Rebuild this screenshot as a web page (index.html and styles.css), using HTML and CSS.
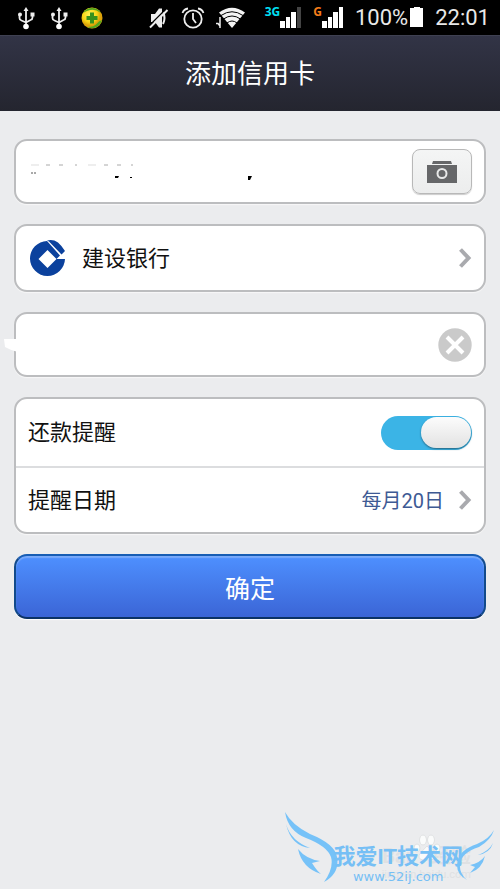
FILE: index.html
```html
<!DOCTYPE html>
<html lang="zh-CN">
<head>
<meta charset="utf-8">
<meta name="viewport" content="width=device-width, initial-scale=1">
<title>添加信用卡</title>
<link rel="stylesheet" href="styles.css">
</head>
<body>
<svg class="defs" aria-hidden="true">
  <symbol id="usb" viewBox="0 0 22 24">
    <path d="M11 3v17M4.500 8.500v3.500q0 2 2 2.500l4.500 2M17.500 8.500v3q0 2-2 2.500l-4.500 2.500" fill="none" stroke="#eee" stroke-width="1.800"/>
    <path d="M11 1l2.500 4h-5zM15.500 6.500h4v4h-4z" fill="#eee"/>
    <circle cx="5" cy="8.500" r="2" fill="#eee"/><circle cx="11" cy="20.500" r="2.800" fill="#fff"/>
  </symbol>
  <symbol id="chevron" viewBox="0 0 14 22"><path d="M2.500 2.500l8 8.500-8 8.500" fill="none" stroke="#a9aaae" stroke-width="4"/></symbol>
</svg>
<div class="status">
  <div class="status-group notices">
    <svg width="22" height="24"><use href="#usb"/></svg>
    <svg width="22" height="24"><use href="#usb"/></svg>
    <svg width="22" height="24" viewBox="0 0 22 24">
      <defs><radialGradient id="ball" cx=".4" cy=".35"><stop offset="0" stop-color="#fff45a"/><stop offset=".7" stop-color="#f6d414"/><stop offset="1" stop-color="#dda20a"/></radialGradient></defs>
      <circle cx="11" cy="12" r="10.500" fill="url(#ball)"/>
      <path d="M2 7A10.500 10.500 0 0 1 20 7Q14 2.500 9 4 5 5 2 7zM21 14A10.500 10.500 0 0 1 6 21Q13 21 16 17.500 18 14.500 21 14z" fill="#52a51e"/>
      <path d="M9 6.500h4v3.500h3.500v4H13v3.500H9V14H5.500v-4H9z" fill="#37911d"/>
    </svg>
  </div>
  <div class="status-group">
    <svg width="21" height="24" viewBox="0 0 21 24">
      <path d="M2 8h4l4-5.500h3v19h-3L6 16H2z" fill="#eee"/><path d="M14 6q3 6 0 12" fill="none" stroke="#eee" stroke-width="2"/>
      <path d="M0 20L17 3" stroke="#000" stroke-width="1.500"/><path d="M1 21.500L18.500 4" stroke="#eee" stroke-width="2"/>
    </svg>
    <svg width="24" height="24" viewBox="0 0 24 24" fill="none" stroke="#eee" stroke-width="1.800">
      <circle cx="12" cy="13" r="8.700"/><path d="M12 7v6l3 4M1.500 7Q3 3 7 2.500M22.500 7Q21 3 17 2.500"/>
    </svg>
    <svg width="38" height="24" viewBox="0 0 38 24">
      <path d="M0 17.500h2L4 20v-9M4 12v10" fill="none" stroke="#eee" stroke-width="1.500"/>
      <path d="M3 6.500Q16-3 29 6.500L16 22z" fill="#f4f4f4"/>
      <path d="M5 9.500q11-7.500 22 0M7.500 13q8.500-6 17 0M11 17q5-4 10 0" fill="none" stroke="#000" stroke-width="1"/>
    </svg>
    <div class="signal">
      <span class="net net-3g">3G</span>
      <svg width="22" height="24" viewBox="0 0 22 24" fill="#fff"><path d="M0 15h5v7H0zM6 11h4v11H6zM11 6h5v16h-5z"/><path d="M17 1h4v21h-4z" fill="#444"/></svg>
    </div>
    <div class="signal">
      <span class="net net-g">G</span>
      <svg width="22" height="24" viewBox="0 0 22 24" fill="#fff"><path d="M0 15h5v7H0zM6 11h4v11H6zM11 6h5v16h-5zM17 1h4v21h-4z"/></svg>
    </div>
    <div class="battery"><span>100%</span>
      <svg width="14" height="24" viewBox="0 0 14 24"><path d="M4 1h6v1h3v19H0V2h4z" fill="#fff"/></svg>
    </div>
    <time>22:01</time>
  </div>
</div>
<header class="title-bar"><h1>添加信用卡</h1></header>
<main>
  <form class="form">
    <div class="card entry">
      <div class="number">
        <input type="text" aria-label="卡号" inputmode="numeric">
        <svg class="traces" width="226" height="20" viewBox="0 0 226 20" aria-hidden="true">
          <path d="M1 1h8M58 1h8" stroke="#ddd"/><path d="M16 1h4M29 1h4M45 1h2M74 1h4M87 1h4M101 1h2" stroke="#aaa"/>
          <path d="M1 9h6" stroke="#555" stroke-dasharray="2 1"/><path d="M85 12h4l-1 2h-3zM100 13h2v1h-2zM218 12h4l-2 4h-2z" fill="#000"/>
        </svg>
      </div>
      <button class="camera" type="button" aria-label="拍照">
        <svg width="30" height="22" viewBox="0 0 30 22"><path d="M6 0h18l1 3H5zM0 4h30v18H0z" fill="#666769"/><circle cx="15" cy="12.500" r="4.500" fill="none" stroke="#e8e9e9" stroke-width="2"/></svg>
      </button>
    </div>
    <button class="card bank" type="button">
      <svg width="36" height="38" viewBox="0 0 36 38" fill="#0b419d">
        <path d="M17 2A17.500 17.500 0 1 0 35 20H26.500L17.500 29 8.500 20 17.500 11l9 9L30 16.500z"/>
        <path d="M17 1.500Q23 0 28 3.500 32 7 35 12l-3.500 3.500L19 2.500z"/>
      </svg>
      <span class="label">建设银行</span>
      <svg class="end" width="14" height="22"><use href="#chevron"/></svg>
    </button>
    <div class="card entry phone">
      <svg class="smudge" width="14" height="13" viewBox="0 0 14 13" aria-hidden="true"><path d="M0 0h14v13Q6 11 1 8z" fill="#fff"/></svg>
      <input type="text" aria-label="手机号">
      <button class="clear" type="button" aria-label="清除">
        <svg width="34" height="34" viewBox="0 0 34 34"><circle cx="17" cy="17" r="16.700" fill="#cacaca"/><path d="M9 9l16 16M25 9L9 25" stroke="#fff" stroke-width="4"/></svg>
      </button>
    </div>
    <div class="card group">
      <label class="row"><span class="label">还款提醒</span><input class="switch" type="checkbox" role="switch" checked></label>
      <button class="row" type="button"><span class="label">提醒日期</span><span class="value">每月20日</span>
        <svg width="14" height="22"><use href="#chevron"/></svg></button>
    </div>
    <button class="submit" type="submit">确定</button>
  </form>
</main>
<div class="watermark">
  <div class="ghost"><strong>Bai<span class="gap"></span>经验</strong><span>jingyan.baidu.com</span></div>
  <svg class="paw" width="28" height="30" viewBox="0 0 28 30" fill="#fafbfb" stroke="#e0e2e3">
    <ellipse cx="4" cy="14" rx="3" ry="4"/><ellipse cx="10" cy="6" rx="3.500" ry="5"/><ellipse cx="18" cy="6" rx="3.500" ry="5"/><ellipse cx="24" cy="14" rx="3" ry="4"/><path d="M14 12q5 5 8 9 1 6-8 5-9 1-8-5 3-4 8-9z"/>
  </svg>
  <svg class="wing" width="54" height="72" viewBox="0 0 54 72" fill="#76c2f8">
    <path d="M0 0Q7 13 25 22 50 32 52 45 55 61 39 70 49 56 46 45 42 34 21 26 3 19 0 0z"/>
    <path d="M1 12q5 17 24 24Q6 34 1 12z"/><path d="M13 37q8 10 22 12l-8 2q5 8 9 11Q17 56 13 37z"/>
  </svg>
  <div class="brand"><strong>我爱IT技术网</strong><span>www.52ij.com</span></div>
  <svg class="wing right" width="38" height="52" viewBox="0 0 38 52" fill="#76c2f8">
    <path d="M37 0Q34 10 22 17 4 23 3 34 2 43 10 50-3 43 1 30 3 20 20 14 32 9 37 0z"/>
    <path d="M36 13q-3 10-15 12 11-4 15-12z"/><path d="M28 26q-5 7-15 9l5 2-5 6q12-4 15-17z"/>
  </svg>
</div>
</body>
</html>
```
FILE: styles.css
```css
* { box-sizing: border-box; }
body {
  margin: 0;
  min-height: 100vh;
  position: relative;
  display: flex;
  flex-direction: column;
  background: #ebecee;
  color: #111;
  font-family: Roboto, "Noto Sans CJK SC", sans-serif;
  font-size: 22px;
}
button, input { font: inherit; color: inherit; margin: 0; }
button { cursor: pointer; }
svg { display: block; flex: none; }
.defs { position: absolute; width: 0; height: 0; }

.status {
  display: flex;
  justify-content: space-between;
  height: 35px;
  padding: 0 10px 0 15px;
  background: #000;
  color: #e8e8e8;
}
.status-group { display: flex; align-items: center; gap: 11px; }
.signal { display: flex; align-items: center; }
.net {
  align-self: flex-start;
  font-family: "Noto Sans", sans-serif;
  font-size: 12px;
  font-weight: 700;
  line-height: 12px;
}
.net-3g { color: #00e0f5; }
.net-g { color: #f67d1a; }
.battery { display: flex; align-items: center; gap: 2px; }

.title-bar {
  display: flex;
  align-items: center;
  justify-content: center;
  height: 76px;
  border-top: 1px solid #3f4152;
  background: linear-gradient(#323446, #24252f);
  color: #fff;
}
h1 { margin: 0; font-size: 26px; font-weight: 400; line-height: 38px; }

.form {
  display: flex;
  flex-direction: column;
  gap: 20px;
  padding: 28px 14px;
}
.card {
  display: flex;
  align-items: center;
  min-height: 65px;
  padding: 0 12px 0 14px;
  border: 2px solid #bcbdbf;
  border-radius: 13px;
  background: #fff;
  box-shadow: 0 1px 1px #f8f8f8;
  text-align: left;
}
.entry input {
  display: block;
  flex: 1;
  width: 100%;
  min-width: 0;
  height: 44px;
  padding: 0;
  border: 0;
  outline: 0;
  background: transparent;
}
.number { position: relative; flex: 1; }
.traces { position: absolute; left: 0; top: 14px; pointer-events: none; }
.camera {
  display: flex;
  align-items: center;
  justify-content: center;
  width: 60px;
  height: 45px;
  padding: 0;
  border: 1px solid #b8b8b8;
  border-radius: 8px;
  background: linear-gradient(#f4f5f5, #eceded);
  box-shadow: 0 1px 1px #ccc;
}
.label { padding-bottom: 5px; }
.value { padding-bottom: 1px; }
.bank { min-height: 68px; gap: 16px; }
.end { margin-left: auto; }
.phone { position: relative; }
.smudge { position: absolute; left: -12px; top: 25px; }
.clear { padding: 0; border: 0; background: none; }

.group { flex-direction: column; align-items: stretch; padding: 0; }
.row {
  display: flex;
  align-items: center;
  gap: 14px;
  height: 67px;
  padding: 0 12px;
  border: 0;
  background: none;
}
.row + .row { height: 66px; border-top: 2px solid #dcdddf; }
.row .label { flex: 1; text-align: left; }
.value { color: #3e5a94; font-size: 20px; }
.switch {
  appearance: none;
  display: flex;
  justify-content: flex-end;
  width: 91px;
  height: 34px;
  padding: 1px;
  border-radius: 17px;
  background: #3bb4e6;
}
.switch::before {
  content: "";
  width: 50px;
  height: 31px;
  border-radius: 16px;
  background: linear-gradient(#fcfcfc, #e2e2e2);
  box-shadow: 0 1px 2px #25627c;
}
.switch:not(:checked) { justify-content: flex-start; background: #bbb; }

.submit {
  height: 65px;
  padding: 0;
  border: 2px solid;
  border-color: #175db4 #124a8b #0b3265;
  border-radius: 13px;
  background: linear-gradient(#4e90ff, #3b65d6);
  box-shadow: inset 0 2px 1px #79a9fa, 0 1px 1px #fff;
  color: #fff;
  font-size: 25px;
}

.watermark {
  position: absolute;
  right: 5px;
  bottom: 4px;
  display: flex;
  align-items: flex-end;
  pointer-events: none;
}
.brand {
  position: relative;
  display: flex;
  flex-direction: column;
  align-items: center;
  margin: 0 -6px;
  color: #76bff5;
  font-size: 13px;
  line-height: 16px;
  font-family: "DejaVu Sans", sans-serif;
  white-space: nowrap;
}
.brand strong {
  font-family: "Liberation Sans", "Noto Sans CJK SC", sans-serif;
  font-size: 22px;
  line-height: 24px;
}
.wing { position: relative; margin-bottom: 1px; }
.right { margin-bottom: 3px; }
.paw { position: absolute; right: 54px; top: 22px; }
.ghost {
  position: absolute;
  right: 24px;
  top: 32px;
  display: flex;
  flex-direction: column;
  align-items: flex-end;
  color: #dfe1e3;
  font-size: 11px;
  line-height: 14px;
  white-space: nowrap;
}
.ghost strong { font-size: 20px; line-height: 24px; }
.gap { display: inline-block; width: 20px; }
```
